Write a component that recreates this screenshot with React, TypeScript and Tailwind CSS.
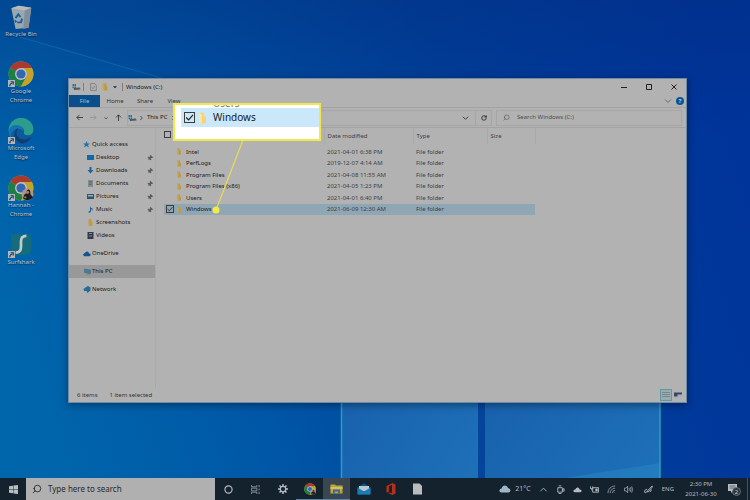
import React from "react";
import { RotateCw, Search, Pin } from "lucide-react";

interface IconProps {
  className?: string;
}

function ChromeLogo({ className }: IconProps) {
  return (
    <svg viewBox="0 0 48 48" className={className}>
      <circle cx="24" cy="24" r="23" fill="#c2a42c" />
      <path d="M24 24 L4 12.500 A23 23 0 0 1 44 12.500 Z" fill="#a83a30" />
      <path d="M4 12.500 A23 23 0 0 0 24 47 L34 29.500 L24 24 Z" fill="#1c8046" />
      <path d="M24 13 H44.200 A23 23 0 0 1 24 47 L34 29.500 Z" fill="#c2a42c" />
      <circle cx="24" cy="24" r="11" fill="#c0c4c8" />
      <circle cx="24" cy="24" r="8.500" fill="#3566b4" />
    </svg>
  );
}

function HannahLogo({ className }: IconProps) {
  return (
    <svg viewBox="0 0 48 48" className={className}>
      <ChromeLogo />
      <circle cx="36" cy="36" r="11" fill="#a89a88" />
      <path d="M28 44 Q29 34 34 34 L35 28 Q40 24 41 31 L42 37 Q46 38 46 42 Q38 50 28 44 Z" fill="#1c1b1e" />
      <circle cx="36" cy="32" r="3" fill="#a87860" />
      <circle cx="32" cy="41" r="2" fill="#a87860" />
    </svg>
  );
}

function EdgeLogo({ className }: IconProps) {
  return (
    <svg viewBox="0 0 48 48" className={className}>
      <circle cx="24" cy="24" r="23" fill="#0c5a9c" />
      <path d="M1 24 A23 23 0 0 1 47 21 Q47 31 36 32 Q27 31 30 25 Q30 16 19 16 Q7 16 1 24 Z" fill="#2c9c8c" />
      <path d="M1 24 Q4 12 16 13 Q29 15 29 24 Q20 17 12 22 Q4 25 6 38 Q1 31 1 24 Z" fill="#1473b0" />
      <path d="M19 18 Q11 30 21 38 Q31 43 43 35 Q38 46 25 47 Q12 43 12 31 Q12 22 19 18 Z" fill="#123c74" />
    </svg>
  );
}

function SurfsharkLogo({ className }: IconProps) {
  return (
    <svg viewBox="0 0 48 48" className={className}>
      <path d="M8 4 H36 Q43 4 43 12 V30 Q43 42 30 43 H14 Q6 43 6 34 V4 Z" fill="#146c7c" />
      <path d="M34 7 Q24 7 24 17 V27 Q24 38 14 38" fill="none" stroke="#c4c8c6" strokeWidth="5" />
    </svg>
  );
}

function RecycleBin({ className }: IconProps) {
  return (
    <svg viewBox="0 0 48 48" className={className}>
      <path d="M6 8 L20 3 L43 7 L38 44 L14 46 Z" fill="#9ba7ae" />
      <path d="M6 8 L20 3 L43 7 L31 12 Z" fill="#b4bcc1" />
      <path d="M31 12 L43 7 L38 44 L28 46 Z" fill="#828f99" />
      <path d="M14 26 L19 19 L23 24 M26 27 L24 34 L17 34 M13 30 L15 34" fill="none" stroke="#155f9f" strokeWidth="3.500" />
    </svg>
  );
}

function Shortcut() {
  return (
    <svg viewBox="0 0 8 8" className="absolute bottom-0 left-0 size-[7px]">
      <rect width="8" height="8" fill="#b0b6ba" />
      <path d="M2 7 Q2 4 5 3.500 M3 2 H6 V5" fill="none" stroke="#14406e" strokeWidth="1.300" />
    </svg>
  );
}

function FolderIcon({ className }: IconProps) {
  return (
    <svg viewBox="0 0 10 14" className={className}>
      <path d="M1 1 H7 V5 L9 6 V13 H3 L1 12 Z" fill="#bc9a41" />
      <path d="M1 1 L4 3 V13 L1 12 Z" fill="#c9a94f" />
    </svg>
  );
}

function DriveIcon({ className }: IconProps) {
  return (
    <svg viewBox="0 0 18 14" className={className}>
      <path d="M1 1 H4 V5 H1 Z M5 1 H8 V5 H5 Z M1 6 H4 V9 H1 Z M5 6 H8 V9 H5 Z" fill="#1678a8" />
      <path d="M3 9 L16 8 L17 12 L4 13 Z" fill="#4d5a62" />
      <path d="M13 10.500 H15" stroke="#37a06a" />
    </svg>
  );
}

function Tick({ className, checked, label }: { className: string; checked?: boolean; label: string }) {
  return (
    <span className={`inline-grid shrink-0 ${className}`}>
      <input type="checkbox" aria-label={label} defaultChecked={checked} className="peer col-start-1 row-start-1 size-full appearance-none border border-[#3d3d3d]" />
      <svg viewBox="0 0 10 10" className="pointer-events-none col-start-1 row-start-1 hidden size-full peer-checked:block">
        <path d="M2 5 L4.200 7.200 L8.200 2.600" fill="none" stroke="#222222" strokeWidth="1" />
      </svg>
    </span>
  );
}

const shortcuts = [
  { label: "Recycle Bin", icon: RecycleBin, link: false },
  { label: "Google Chrome", icon: ChromeLogo, link: true },
  { label: "Microsoft Edge", icon: EdgeLogo, link: true },
  { label: "Hannah - Chrome", icon: HannahLogo, link: true },
  { label: "Surfshark", icon: SurfsharkLogo, link: true },
];

const quickAccess = [
  { label: "Desktop", icon: <path d="M0 2 H14 V12 H0 Z" fill="#1269a8" />, pinned: true },
  { label: "Downloads", icon: <path d="M5 0 H9 V6 H13 L7 13 L1 6 H5 Z" fill="#1b659c" />, pinned: true },
  {
    label: "Documents",
    icon: (
      <>
        <path d="M2 0 H12 V14 H2 Z" fill="#828b90" />
        <path d="M4 3 H10 M4 6 H10 M4 9 H10" stroke="#4a555c" />
      </>
    ),
    pinned: true,
  },
  {
    label: "Pictures",
    icon: (
      <>
        <path d="M0 2 H14 V12 H0 Z" fill="#2c5570" />
        <path d="M2 4 H12 V7 H2 Z" fill="#8fb0bc" />
      </>
    ),
    pinned: true,
  },
  { label: "Music", icon: <path d="M6 0 Q7 4 11 5 Q12 8 10 10 Q10 6 8 6 V11 Q6 15 3 13 Q2 10 6 10 Z" fill="#1c6799" />, pinned: true },
  { label: "Screenshots", icon: <path d="M3 0 H9 V5 L11 6 V14 H5 L3 13 Z" fill="#bf9d43" />, pinned: false },
  {
    label: "Videos",
    icon: (
      <>
        <path d="M1 0 H13 V14 H1 Z" fill="#303a4c" />
        <path d="M4 3 H10 M4 8 H10" stroke="#7c8798" strokeWidth="2" />
      </>
    ),
    pinned: false,
  },
];

const files = [
  { name: "Intel", date: "2021-04-01 6:38 PM" },
  { name: "PerfLogs", date: "2019-12-07 4:14 AM" },
  { name: "Program Files", date: "2021-04-08 11:55 AM" },
  { name: "Program Files (x86)", date: "2021-04-05 1:23 PM" },
  { name: "Users", date: "2021-04-01 6:40 PM" },
  { name: "Windows", date: "2021-06-09 12:30 AM" },
];

function Wallpaper() {
  return (
    <svg viewBox="0 0 750 478" preserveAspectRatio="none" className="absolute inset-0 size-full">
      <defs>
        <linearGradient id="base" x1="0" y1="0.600" x2="1" y2="0.400">
          <stop offset="0" stopColor="#0064a9" />
          <stop offset="0.300" stopColor="#0055a6" />
          <stop offset="0.650" stopColor="#003f9b" />
          <stop offset="1" stopColor="#00349a" />
        </linearGradient>
        <linearGradient id="top" x1="0.300" y1="0" x2="0.400" y2="1">
          <stop offset="0" stopColor="#032a78" stopOpacity="0.400" />
          <stop offset="0.350" stopColor="#032a78" stopOpacity="0" />
        </linearGradient>
        <linearGradient id="beam" x1="0" y1="0" x2="1" y2="0">
          <stop offset="0" stopColor="#0071bb" stopOpacity="0.120" />
          <stop offset="1" stopColor="#0071bb" stopOpacity="0" />
        </linearGradient>
        <linearGradient id="pane" x1="0" y1="0" x2="1" y2="1">
          <stop offset="0" stopColor="#175aa8" />
          <stop offset="1" stopColor="#1d70b8" />
        </linearGradient>
      </defs>
      <rect width="750" height="478" fill="url(#base)" />
      <rect width="750" height="478" fill="url(#top)" />
      <path d="M0 30 L340 130 V478 H0 Z" fill="url(#beam)" />
      <path d="M20 37 L165 79" stroke="#2b87c2" strokeWidth="1" opacity="0.350" />
      <rect x="341" y="240" width="137" height="238" fill="url(#pane)" />
      <rect x="478" y="240" width="7" height="238" fill="#04459c" />
      <rect x="485" y="240" width="175" height="238" fill="url(#pane)" />
      <path d="M565 478 L660 463 V478 Z" fill="#2683c0" opacity="0.600" />
      <path d="M341.500 240 V478 M660 240 V478" stroke="#2ba0bd" strokeWidth="1.500" />
    </svg>
  );
}

function TitleBar() {
  return (
    <div className="flex h-4 items-center pl-[3px]">
      <DriveIcon className="h-2 w-[9px]" />
      <span className="ml-0.5 h-2 w-px bg-[#7d7d7d]" />
      <svg viewBox="0 0 12 14" className="ml-1.5 h-2 w-[7px]">
        <path d="M1 1 H8 L11 4 V13 H1 Z M3 7 L5 10 L9 5" fill="none" stroke="#666666" />
      </svg>
      <FolderIcon className="ml-[5px] h-2 w-1.5" />
      <svg viewBox="0 0 6 6" className="ml-[5px] size-1">
        <path d="M0 2 H6 L3 5 Z" fill="#222222" />
      </svg>
      <span className="ml-[5px] h-2 w-px bg-[#7d7d7d]" />
      <h1 className="ml-[3px] text-[6px]">Windows (C:)</h1>
      <div className="ml-auto flex">
        <button aria-label="Minimize" className="flex h-4 w-[25px] items-center justify-center">
          <svg viewBox="0 0 6 6" className="size-1.5"><path d="M0 3.500 H6" stroke="#222222" /></svg>
        </button>
        <button aria-label="Maximize" className="flex h-4 w-[25px] items-center justify-center">
          <svg viewBox="0 0 6 6" className="size-1.5"><path d="M0.500 0.500 H5.500 V5.500 H0.500 Z" fill="none" stroke="#222222" /></svg>
        </button>
        <button aria-label="Close" className="flex h-4 w-[25px] items-center justify-center">
          <svg viewBox="0 0 6 6" className="size-1.5"><path d="M0.500 0.500 L5.500 5.500 M5.500 0.500 L0.500 5.500" stroke="#222222" /></svg>
        </button>
      </div>
    </div>
  );
}

function Ribbon() {
  return (
    <div className="flex h-[13px] items-stretch border-b border-[#a3a3a3] text-[6px] text-[#333333]">
      <button className="w-[31px] bg-[#0a4f8c] text-[#a9bccb]">File</button>
      <button className="w-[30px]">Home</button>
      <button className="w-[30px]">Share</button>
      <button className="w-[28px]">View</button>
      <div className="ml-auto flex items-center gap-1 pr-0.5">
        <svg viewBox="0 0 8 6" className="h-1.5 w-2"><path d="M1 1.500 L4 4.500 L7 1.500" fill="none" stroke="#666666" /></svg>
        <button aria-label="Help" className="flex size-2 items-center justify-center rounded-full bg-[#0b5596] text-[6px] font-bold text-[#bcd0dd]">?</button>
      </div>
    </div>
  );
}

function AddressBar() {
  return (
    <div className="flex h-5 items-center border-b border-[#a3a3a3] text-[6px]">
      <div className="flex w-[58px] shrink-0 items-center gap-[7px] pl-[7px]">
        <svg viewBox="0 0 8 8" className="size-[7px] shrink-0"><path d="M8 4 H1 M4 1 L1 4 L4 7" fill="none" stroke="#333333" /></svg>
        <svg viewBox="0 0 8 8" className="size-[7px] shrink-0"><path d="M0 4 H7 M4 1 L7 4 L4 7" fill="none" stroke="#959595" /></svg>
        <svg viewBox="0 0 6 6" className="size-1 shrink-0"><path d="M0.500 2 L3 4.500 L5.500 2" fill="none" stroke="#333333" /></svg>
        <svg viewBox="0 0 8 8" className="size-[7px] shrink-0"><path d="M4 8 V1 M1 4 L4 1 L7 4" fill="none" stroke="#333333" /></svg>
      </div>
      <div className="flex h-4 flex-1 items-center border border-[#a6a6a6]">
        <DriveIcon className="h-2 w-[9px]" />
        <svg viewBox="0 0 6 6" className="ml-0.5 size-1"><path d="M2 0 L5 3 L2 6" fill="none" stroke="#222222" /></svg>
        <span className="ml-1 whitespace-nowrap">This PC</span>
        <svg viewBox="0 0 6 6" className="ml-1 size-1"><path d="M2 0 L5 3 L2 6" fill="none" stroke="#222222" /></svg>
        <svg viewBox="0 0 8 6" className="mr-1.5 ml-auto h-1.5 w-[7px]"><path d="M1 1.500 L4 4.500 L7 1.500" fill="none" stroke="#333333" /></svg>
        <button aria-label="Refresh" className="flex h-full w-4 items-center justify-center border-l border-[#a6a6a6]">
          <RotateCw className="size-1.5" strokeWidth={3} />
        </button>
      </div>
      <label className="mr-1 ml-1 flex h-4 w-[186px] items-center gap-[7px] border border-[#a6a6a6] pl-1.5">
        <Search className="size-[7px] text-[#555555]" strokeWidth={2} transform="scale(-1 1)" />
        <input aria-label="Search Windows (C:)" placeholder="Search Windows (C:)" className="min-w-0 flex-1 bg-transparent placeholder:text-[#4d4d4d]" />
      </label>
    </div>
  );
}

function Sidebar() {
  return (
    <nav className="w-[87px] shrink-0 border-r border-[#a9a9a9] pt-2.5 text-[6px]">
      <a href="#quick" className="flex h-[13px] items-center gap-0.5 pl-3.5">
        <svg viewBox="0 0 14 14" className="size-[7px]"><path d="M7 0 L9 5 L14 5 L10 8 L12 13 L7 10 L2 13 L4 8 L0 5 H5 Z" fill="#1b75a8" /></svg>
        Quick access
      </a>
      {quickAccess.map((item) => (
        <a key={item.label} href="#folder" className="flex h-[13px] items-center gap-0.5 pr-0.5 pl-[18px]">
          <svg viewBox="0 0 14 14" className="size-[7px] shrink-0">{item.icon}</svg>
          {item.label}
          {item.pinned && <Pin className="ml-auto size-1.5 rotate-45 fill-[#555555] text-[#555555]" />}
        </a>
      ))}
      <a href="#onedrive" className="mt-[5px] flex h-[13px] items-center gap-px pl-3.5">
        <svg viewBox="0 0 18 14" className="h-[7px] w-2"><path d="M3 13 Q-1 11 1 8 Q3 6 4 6 Q7 1 11 3 Q13 4 14 7 Q18 7 17 11 Q16 13 14 13 Z" fill="#0e568f" /></svg>
        OneDrive
      </a>
      <a href="#pc" className="mt-[5px] flex h-[13px] items-center gap-px bg-[#999999] pl-3.5">
        <svg viewBox="0 0 16 14" className="h-[7px] w-2"><path d="M3 2 L15 4 V11 L3 9 Z M6 12 H14" fill="#3682a8" stroke="#45606f" /></svg>
        This PC
      </a>
      <a href="#network" className="mt-[5px] flex h-[13px] items-center gap-px pl-3.5">
        <svg viewBox="0 0 16 14" className="h-[7px] w-2"><path d="M1 6 L5 3 L10 0 L15 3 V9 L9 14 L7 10 L2 10 Z" fill="#226d99" /></svg>
        Network
      </a>
    </nav>
  );
}

function FileList() {
  return (
    <div className="flex-1 pl-2">
      <table className="w-[371px] table-fixed border-collapse text-left text-[6px] text-[#404040]">
        <colgroup>
          <col className="w-[160px]" />
          <col className="w-[89px]" />
          <col className="w-[74px]" />
          <col className="w-[48px]" />
        </colgroup>
        <thead>
          <tr className="h-4">
            <th className="p-0">
              <Tick className="size-[7px]" label="Select all" />
            </th>
            <th className="border-l border-[#a9a9a9] p-0 pl-[3px] font-normal">Date modified</th>
            <th className="border-l border-[#a9a9a9] p-0 pl-[3px] font-normal">Type</th>
            <th className="border-x border-[#a9a9a9] p-0 pl-[3px] font-normal">Size</th>
          </tr>
        </thead>
      </table>
      <table className="mt-0.5 h-[69px] w-[371px] table-fixed border-collapse text-left text-[6px] leading-[8px] text-[#404040]">
        <colgroup>
          <col className="w-[160px]" />
          <col className="w-[89px]" />
          <col className="w-[74px]" />
          <col className="w-[48px]" />
        </colgroup>
        <tbody>
          {files.map((file) => {
            const selected = file.name === "Windows";
            return (
              <tr key={file.name} className={selected ? "bg-[#8fa6b5]" : ""}>
                <td className="p-0 text-[#1a1a1a]">
                  <div className="flex items-center pl-0.5">
                    <span className="flex w-2">{selected && <Tick className="size-2" checked label="Select Windows" />}</span>
                    <FolderIcon className="ml-0.5 h-[7px] w-1.5" />
                    <span className="ml-1">{file.name}</span>
                  </div>
                </td>
                <td className="p-0 pl-[3px]">{file.date}</td>
                <td className="p-0 pl-[3px]">File folder</td>
                <td />
              </tr>
            );
          })}
        </tbody>
      </table>
    </div>
  );
}

function ExplorerWindow() {
  return (
    <section className="absolute top-[78px] right-[63px] bottom-[75px] left-[68px] flex flex-col border border-[#6f8ba8] bg-[#b2b2b2] text-[#1a1a1a] shadow-[0_2px_8px_rgba(0,0,0,0.4)]">
      <TitleBar />
      <Ribbon />
      <AddressBar />
      <div className="flex flex-1">
        <Sidebar />
        <FileList />
      </div>
      <footer className="flex h-3.5 items-center pr-1 pl-2 text-[6px] text-[#333333]">
        <span>6 items</span>
        <span className="ml-3">1 item selected</span>
        <button aria-label="Details view" className="ml-auto flex size-3 items-center justify-center border border-[#5f9a9f] bg-[#97abb0]">
          <svg viewBox="0 0 8 8" className="size-2"><path d="M0 1.500 H8 M0 3.500 H8 M0 5.500 H8" stroke="#75878c" /></svg>
        </button>
        <button aria-label="Large icons view" className="ml-0.5">
          <svg viewBox="0 0 16 12" className="h-1.5 w-2"><path d="M0 1 H16 V11 H0 Z" fill="#a7b0b8" /><path d="M0 1 H16 V5 H0 Z M0 5 H7 V9 H0 Z" fill="#38476a" /></svg>
        </button>
      </footer>
    </section>
  );
}

// Magnified view of the selected row, with a leader line back to it
function Callout() {
  return (
    <>
      <svg viewBox="0 0 40 80" className="pointer-events-none absolute top-[138px] left-[209px] h-20 w-10">
        <path d="M34 2 L7 72" stroke="#e6dd56" strokeWidth="1.200" />
        <circle cx="7" cy="72" r="3.500" fill="#f4ec46" />
      </svg>
      <div className="absolute top-[103px] left-[173px] h-[38px] w-[148px] overflow-hidden border-2 border-[#f0e84c] bg-white text-[10px] text-[#1a1a1a]">
        {/* Row above, scrolled almost out of view */}
        <div className="flex h-[3px] items-end pl-[38px] leading-[10px] text-[#777777]">Users</div>
        <div className="ml-1.5 flex h-[19px] items-center bg-[#cbe7fa] pl-[3px]">
          <Tick className="size-[11px]" checked label="Windows" />
          <svg viewBox="0 0 10 14" className="ml-[3px] h-3 w-[9px]">
            <path d="M1 1 H7 V5 L9 6 V13 H3 L1 12 Z" fill="#f6d374" />
            <path d="M1 1 L4 3 V13 L1 12 Z" fill="#ffe8a0" />
          </svg>
          <span className="ml-1.5">Windows</span>
        </div>
      </div>
    </>
  );
}

function Taskbar() {
  return (
    <footer className="flex h-[22px] items-stretch bg-[#14222e] text-[#b5bbc0]">
      <button aria-label="Start" className="flex w-[26px] items-center justify-center">
        <svg viewBox="0 0 20 20" className="size-[9px]"><path d="M0 3 L9 1.500 V9.500 H0 Z M10 1.300 L20 0 V9.500 H10 Z M0 10.500 H9 V18.500 L0 17 Z M10 10.500 H20 V20 L10 18.700 Z" fill="#b9bec1" /></svg>
      </button>
      <label className="flex w-[189px] items-center gap-1.5 bg-[#b0b0b0] pl-1.5 text-[8px] text-[#222222]">
        <Search className="size-2.5" strokeWidth={2} transform="scale(-1 1)" />
        <input aria-label="Type here to search" placeholder="Type here to search" className="min-w-0 flex-1 bg-transparent placeholder:text-[#2a2a2a]" />
      </label>
      <div className="flex">
        <button aria-label="Cortana" className="flex w-[27px] items-center justify-center">
          <svg viewBox="0 0 10 10" className="size-[9px]"><circle cx="5" cy="5" r="4" fill="none" stroke="currentColor" strokeWidth="1.300" /></svg>
        </button>
        <button aria-label="Task view" className="flex w-[27px] items-center justify-center">
          <svg viewBox="0 0 10 10" className="size-[9px]"><path d="M0.500 0 V2 H6.500 V0 M0.500 10 V8 H6.500 V10 M0.500 3.500 H6.500 V6.500 H0.500 Z M9 0 V2.500 M9 4 V6 M9 7.500 V10" fill="none" stroke="#8d969c" /></svg>
        </button>
        <button aria-label="Settings" className="flex w-[27px] items-center justify-center">
          <svg viewBox="0 0 20 20" className="size-2.5">
            <circle cx="10" cy="10" r="5.500" fill="none" stroke="currentColor" strokeWidth="2.500" />
            <path d="M10 0 V4 M10 16 V20 M0 10 H4 M16 10 H20 M3 3 L6 6 M14 14 L17 17 M17 3 L14 6 M6 14 L3 17" fill="none" stroke="currentColor" strokeWidth="3" />
          </svg>
        </button>
        <button aria-label="Chrome" className="flex w-[27px] items-center justify-center border-b border-[#5b88aa]">
          <HannahLogo className="size-3" />
        </button>
        <button aria-label="File Explorer" className="flex w-[27px] items-center justify-center border-b border-[#5b88aa] bg-[#3a4751]">
          <svg viewBox="0 0 26 20" className="h-2.5 w-[13px]">
            <path d="M1 1 H10 L12 3 H25 V19 H1 Z" fill="#c2a335" />
            <path d="M1 6 H25 V10 H1 Z" fill="#d5c067" />
            <path d="M6 19 V11 H20 V19 H16 V15 H10 V19 Z" fill="#2d6f9f" />
          </svg>
        </button>
        <button aria-label="Mail" className="flex w-[27px] items-center justify-center">
          <svg viewBox="0 0 28 24" className="h-3 w-3.5">
            <path d="M1 9 L14 0 L27 9 V23 H1 Z" fill="#0e4f84" />
            <path d="M4 6 H24 V16 H4 Z" fill="#b9c8cf" />
            <path d="M1 9 L14 17 L27 9 V23 H1 Z" fill="#1a7eb5" />
          </svg>
        </button>
        <button aria-label="Office" className="flex w-[27px] items-center justify-center">
          <svg viewBox="0 0 20 24" className="h-3 w-2.5">
            <path d="M13 0 L19 3 V21 L13 24 L2 19 L12 20 V4 L6 6 V17 L1 19 V6 Z" fill="#b5301b" />
          </svg>
        </button>
        <button aria-label="Document" className="flex w-[27px] items-center justify-center">
          <svg viewBox="0 0 18 24" className="h-3 w-[9px]"><path d="M0 1 H13 L18 6 V23 H0 Z" fill="#b9bcbe" /></svg>
        </button>
      </div>
      <div className="ml-auto flex items-center text-[7px]">
        <svg viewBox="0 0 24 16" className="h-2 w-3"><path d="M5 15 Q0 14 1 10 Q2 7 5 7 Q7 1 12 1 Q17 1 18 6 Q23 7 23 11 Q22 15 19 15 Z" fill="#9eb6c8" /></svg>
        <span className="ml-1">21°C</span>
        <div className="ml-2 flex items-center gap-2">
          <svg viewBox="0 0 10 10" className="size-[9px]"><path d="M1.500 7 L5 3.500 L8.500 7" fill="none" stroke="currentColor" /></svg>
          <svg viewBox="0 0 10 10" className="size-[9px]"><path d="M2 3 H7 V8 H2 Z M3 1 H6 M3 9.500 H6 M7 5 L9 4 V7 L7 6" fill="none" stroke="currentColor" /></svg>
          <svg viewBox="0 0 10 10" className="size-[9px]"><path d="M2 8 Q0 8 0.500 6 Q1 5 2.500 5 Q4 2 6 3 Q7 3.500 7.500 5 Q10 5 9.500 7 Q9 8 8 8 Z" fill="currentColor" /></svg>
          <svg viewBox="0 0 10 10" className="size-[9px]"><path d="M3 3 H9.500 V8 H3 Z M0.500 1.500 V4 H3 V1.500 M2 4 V6" fill="none" stroke="currentColor" /><path d="M6 4 H8.500 V7 H6 Z" fill="currentColor" /></svg>
          <svg viewBox="0 0 10 10" className="size-[9px]"><path d="M1 9 A8 8 0 0 1 9 1 M3.500 9 A5.500 5.500 0 0 1 9 3.500 M6 9 A3 3 0 0 1 9 6 M8.500 8.500 H9" fill="none" stroke="#8d979e" /></svg>
          <svg viewBox="0 0 10 10" className="size-[9px]"><path d="M0.500 3.500 H2 L4 1.500 V8.500 L2 6.500 H0.500 Z M5.500 3.500 Q6.500 5 5.500 6.500 M7 2.500 Q8.500 5 7 7.500 M8.500 1.500 Q10.500 5 8.500 8.500" fill="none" stroke="currentColor" strokeWidth="0.800" /></svg>
          <svg viewBox="0 0 10 10" className="ml-[3px] size-[9px]"><path d="M3.500 7 L9 1 L9.500 2 L4.500 8 Z M3.500 4.500 Q0 5.500 0.500 8 Q2 10 4 6.500 M6.500 7.500 Q8.500 7 8 5" fill="none" stroke="currentColor" /></svg>
        </div>
        <span className="ml-[9px] text-[6px]">ENG</span>
        <time className="ml-2 flex w-[38px] flex-col items-center text-[6px] leading-[10px]">
          <span>2:30 PM</span>
          <span>2021-06-30</span>
        </time>
        <button aria-label="Notifications" className="ml-[7px] flex">
          <svg viewBox="0 0 14 14" className="size-3.5">
            <path d="M1 2 H10 V9 H6 L4 11 V9 H1 Z" fill="#b5bbc0" />
            <path d="M2.500 4 H8.500 M2.500 6 H8.500" stroke="#4c5860" strokeWidth="0.800" />
            <circle cx="9.500" cy="9.500" r="4" fill="#2b3740" stroke="#7c868c" strokeWidth="0.700" />
            <text x="9.500" y="11.500" textAnchor="middle" fontSize="6" fill="#c5cacd">2</text>
          </svg>
        </button>
        <span className="ml-1.5 h-full w-[3px] border-l border-[#45515a]" />
      </div>
    </footer>
  );
}

export default function App() {
  return (
    <div className="flex min-h-screen flex-col font-['Noto_Sans','Open_Sans',sans-serif]">
      <main className="relative flex-1 overflow-hidden">
        <Wallpaper />
        <div className="relative flex w-[42px] flex-col pt-1">
          {shortcuts.map(({ label, icon: Icon, link }) => (
            <button key={label} className="flex h-[57px] flex-col items-center text-[6px] leading-[9px] text-[#b4c3d0] [text-shadow:0_1px_1px_#00000090]">
              <span className="relative">
                <Icon className="size-[26px]" />
                {link && <Shortcut />}
              </span>
              <span className="w-[36px]">{label}</span>
            </button>
          ))}
        </div>
        <ExplorerWindow />
        <Callout />
      </main>
      <Taskbar />
    </div>
  );
}
